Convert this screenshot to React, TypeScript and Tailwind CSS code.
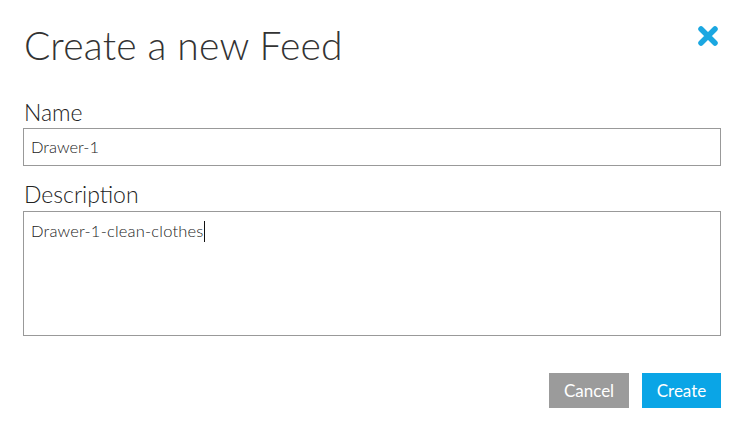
import React from "react";

export default function App() {
  return (
    <div className="w-[742px] h-[430px] bg-white overflow-hidden" style={{ fontFamily: "Lato, 'Open Sans', sans-serif" }}>
      <div className="pl-[23px] pr-[21px] pt-[22px]">
        <div className="flex items-start justify-between">
          <h1 className="text-[39px] leading-[46px] font-light tracking-[0.2px] text-[#333333] pl-[1px]">Create a new Feed</h1>
          <button className="mt-[3px] mr-[2px] w-[22px] h-[22px] flex items-center justify-center">
            <svg width="22" height="22" viewBox="0 0 22 22">
              <path d="M4 4 L18 18 M18 4 L4 18" stroke="#1ba7e1" strokeWidth="5.5" strokeLinecap="round" />
            </svg>
          </button>
        </div>
        <div className="mt-[32px]">
          <label className="block text-[23px] leading-[24px] font-light text-[#222222] pl-[1px]">Name</label>
          <div className="mt-[4px] h-[38px] border border-[#999999] flex items-center px-[7px] text-[16.5px] font-light text-[#222222]">Drawer-1</div>
        </div>
        <div className="mt-[16px]">
          <label className="block text-[23px] leading-[24px] font-light text-[#222222] pl-[1px]">Description</label>
          <div className="mt-[5px] h-[125px] border border-[#999999] px-[7px] pt-[8px] text-[16.5px] leading-[22px] font-light tracking-[0.2px] text-[#222222]">
            Drawer-1-clean-clothes<span className="inline-block w-[1px] h-[21px] bg-[#111] align-middle -mt-[2px]"></span>
          </div>
        </div>
        <div className="mt-[37px] flex justify-end gap-[13px]">
          <button className="w-[80px] h-[35px] bg-[#9b9b9b] text-white text-[17px]">Cancel</button>
          <button className="w-[79px] h-[35px] bg-[#0aa5e6] text-white text-[17px]">Create</button>
        </div>
      </div>
    </div>
  );
}
